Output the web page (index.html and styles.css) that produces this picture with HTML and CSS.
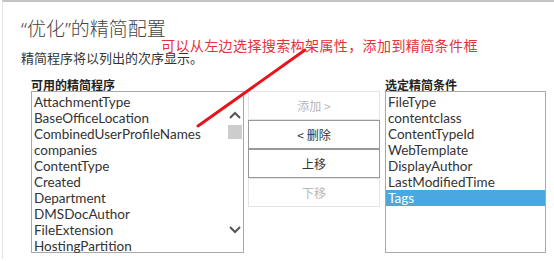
FILE: index.html
```html
<!DOCTYPE html>
<html lang="zh">
<head>
    <meta charset="UTF-8">
    <title>“优化”的精简配置</title>
    <link rel="stylesheet" href="styles.css">
</head>
<body>

<div class="page">
    <h1 class="title">“优化”的精简配置</h1>
    <p class="note">可以从左边选择搜索构架属性，添加到精简条件框</p>
    <p class="subtitle">精简程序将以列出的次序显示。</p>

    <div class="refiners">
        <!-- 可用的精简程序 -->
        <div class="col col-left">
            <div class="col-label">可用的精简程序</div>
            <div class="listbox">
                <ul class="items">
                    <li>AttachmentType</li>
                    <li>BaseOfficeLocation</li>
                    <li>CombinedUserProfileNames</li>
                    <li>companies</li>
                    <li>ContentType</li>
                    <li>Created</li>
                    <li>Department</li>
                    <li>DMSDocAuthor</li>
                    <li>FileExtension</li>
                    <li>HostingPartition</li>
                </ul>
                <div class="scrollbar">
                    <svg class="arrow up" width="12" height="8" viewBox="0 0 12 8"><path d="M1 7 L6 2 L11 7" fill="none" stroke="#555" stroke-width="2"/></svg>
                    <div class="thumb"></div>
                    <div class="track"></div>
                    <svg class="arrow down" width="12" height="8" viewBox="0 0 12 8"><path d="M1 1 L6 6 L11 1" fill="none" stroke="#555" stroke-width="2"/></svg>
                </div>
            </div>
        </div>

        <!-- 按钮 -->
        <div class="col col-mid">
            <button class="btn" disabled>添加 &gt;</button>
            <button class="btn">&lt; 删除</button>
            <button class="btn">上移</button>
            <button class="btn" disabled>下移</button>
        </div>

        <!-- 选定精简条件 -->
        <div class="col col-right">
            <div class="col-label">选定精简条件</div>
            <div class="listbox">
                <ul class="items">
                    <li>FileType</li>
                    <li>contentclass</li>
                    <li>ContentTypeId</li>
                    <li>WebTemplate</li>
                    <li>DisplayAuthor</li>
                    <li>LastModifiedTime</li>
                    <li class="selected">Tags</li>
                </ul>
            </div>
        </div>
    </div>

    <!-- 红色标注线 -->
    <svg class="pointer" width="554" height="261" viewBox="0 0 554 261">
        <line x1="198" y1="126" x2="305" y2="50" stroke="#e8141c" stroke-width="3" stroke-linecap="round"/>
    </svg>
</div>

</body>
</html>
```

FILE: styles.css
```css
/* 基本 */
body {
    margin: 0;
    background: #fff;
    font-family: "Lato", "Noto Sans CJK SC", sans-serif;
    color: #333;
}

.page {
    position: relative;
    width: 552px;
    height: 259px;
    border-top: 2px solid #c4c4c4;
    border-left: 1px solid #e2e2e2;
    margin-left: 2px;
    padding-left: 18px;
    box-sizing: border-box;
    overflow: hidden;
}

.title {
    margin: 15px 0 0 0;
    font-family: "Noto Sans", "Noto Sans CJK SC", sans-serif;
    font-size: 19px;
    font-weight: 300;
    color: #444;
    line-height: 24px;
}

.note {
    margin: -4px 0 0 140px;
    font-family: "Noto Sans CJK SC", sans-serif;
    font-size: 14px;
    letter-spacing: 0.4px;
    line-height: 16px;
    color: #e2323a;
}

.subtitle {
    margin: -3px 0 0 0;
    font-family: "Noto Sans CJK SC", sans-serif;
    font-size: 13px;
    line-height: 16px;
    color: #333;
}

/* 三列 */
.refiners {
    display: flex;
    margin: 12px 0 0 10px;
}

.col-label {
    font-family: "Noto Sans CJK SC", sans-serif;
    font-size: 12px;
    font-weight: bold;
    line-height: 14px;
    height: 13px;
    color: #222;
}

.listbox {
    display: flex;
    height: 162px;
    border: 1px solid #a9a9a9;
    box-sizing: border-box;
    background: #fff;
}

.col-left .listbox {
    width: 213px;
}

.col-right {
    margin-left: 5px;
}

.col-right .listbox {
    width: 161px;
}

.items {
    list-style: none;
    margin: 0;
    padding: 2px 0 0 0;
    flex: 1;
}

.items li {
    font-size: 13.5px;
    line-height: 16px;
    height: 16px;
    padding-left: 2px;
    color: #333;
    white-space: nowrap;
}

.items li.selected {
    background: #4aa7df;
    color: #fff;
}

/* 滚动条 */
.scrollbar {
    width: 15px;
    margin-right: 1px;
    display: flex;
    flex-direction: column;
    align-items: center;
    padding-top: 19px;
}

.scrollbar .arrow {
    display: block;
}

.scrollbar .thumb {
    width: 14px;
    height: 14px;
    margin-top: 6px;
    background: #cdcdcd;
}

.scrollbar .track {
    flex: 1;
}

.scrollbar .arrow.down {
    margin-bottom: 18px;
}

/* 按钮 */
.col-mid {
    display: flex;
    flex-direction: column;
    margin: 13px 0 0 4px;
    width: 132px;
}

.btn {
    height: 29px;
    margin: 0;
    background: #fff;
    border: 1px solid #999;
    font-family: "Noto Sans CJK SC", sans-serif;
    font-size: 12px;
    color: #333;
}

.btn:disabled {
    border-color: #e4e4e4;
    color: #b8b8b8;
}

.pointer {
    position: absolute;
    left: -3px;
    top: -2px;
    pointer-events: none;
}
```
